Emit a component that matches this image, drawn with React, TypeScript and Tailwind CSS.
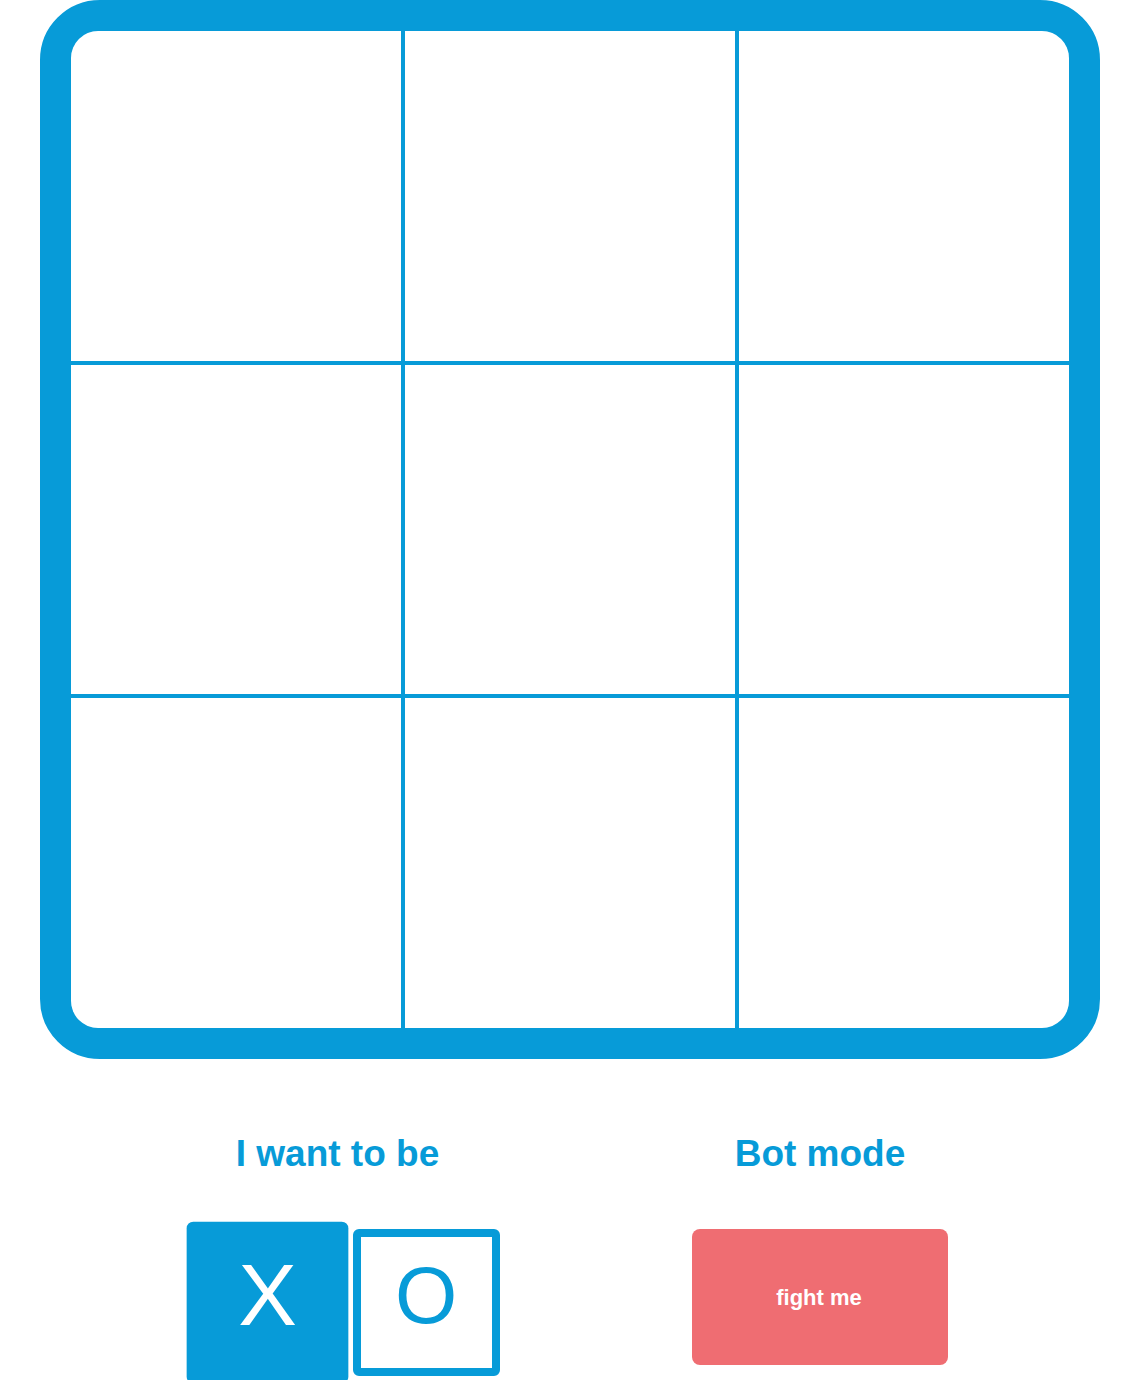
const cells = [0, 1, 2, 3, 4, 5, 6, 7, 8];

function Board() {
  return (
    <div className="ml-[40px] h-[1059px] w-[1060px] rounded-[60px] border-[31px] border-[#079bd8] bg-white">
      <div className="grid h-full w-full grid-cols-3 grid-rows-3 gap-[4px] overflow-hidden rounded-[27px] bg-[#079bd8]">
        {cells.map((i) => (
          <div key={i} className="bg-white" />
        ))}
      </div>
    </div>
  );
}

export default function App() {
  return (
    <div className="h-[1380px] w-[1140px] overflow-hidden bg-white font-['Liberation_Sans',Arial,sans-serif]">
      <Board />
      <div className="ml-[100px] mt-[76px] grid w-[960px] grid-cols-2">
        <div className="flex flex-col items-center">
          <h2 className="pr-[5px] text-[37px] font-bold leading-[37px] text-[#079bd8]">I want to be</h2>
          <div className="mt-[57px] flex gap-[12px] pl-[13px]">
            <button
              type="button"
              className="flex h-[147px] w-[147px] scale-110 items-center justify-center rounded-[6px] bg-[#079bd8] pb-[14px] text-[80px] leading-none text-white"
            >
              X
            </button>
            <button
              type="button"
              className="flex h-[147px] w-[147px] items-center justify-center rounded-[6px] border-[8px] border-[#079bd8] bg-white pb-[14px] text-[80px] leading-none text-[#079bd8]"
            >
              O
            </button>
          </div>
        </div>
        <div className="flex flex-col items-center">
          <h2 className="text-[37px] font-bold leading-[37px] text-[#079bd8]">Bot mode</h2>
          <button
            type="button"
            className="mt-[57px] flex h-[136px] w-[256px] items-center justify-center rounded-[8px] bg-[#ef6d72] pr-[2px] text-[22px] font-bold text-white"
          >
            fight me
          </button>
        </div>
      </div>
    </div>
  );
}
